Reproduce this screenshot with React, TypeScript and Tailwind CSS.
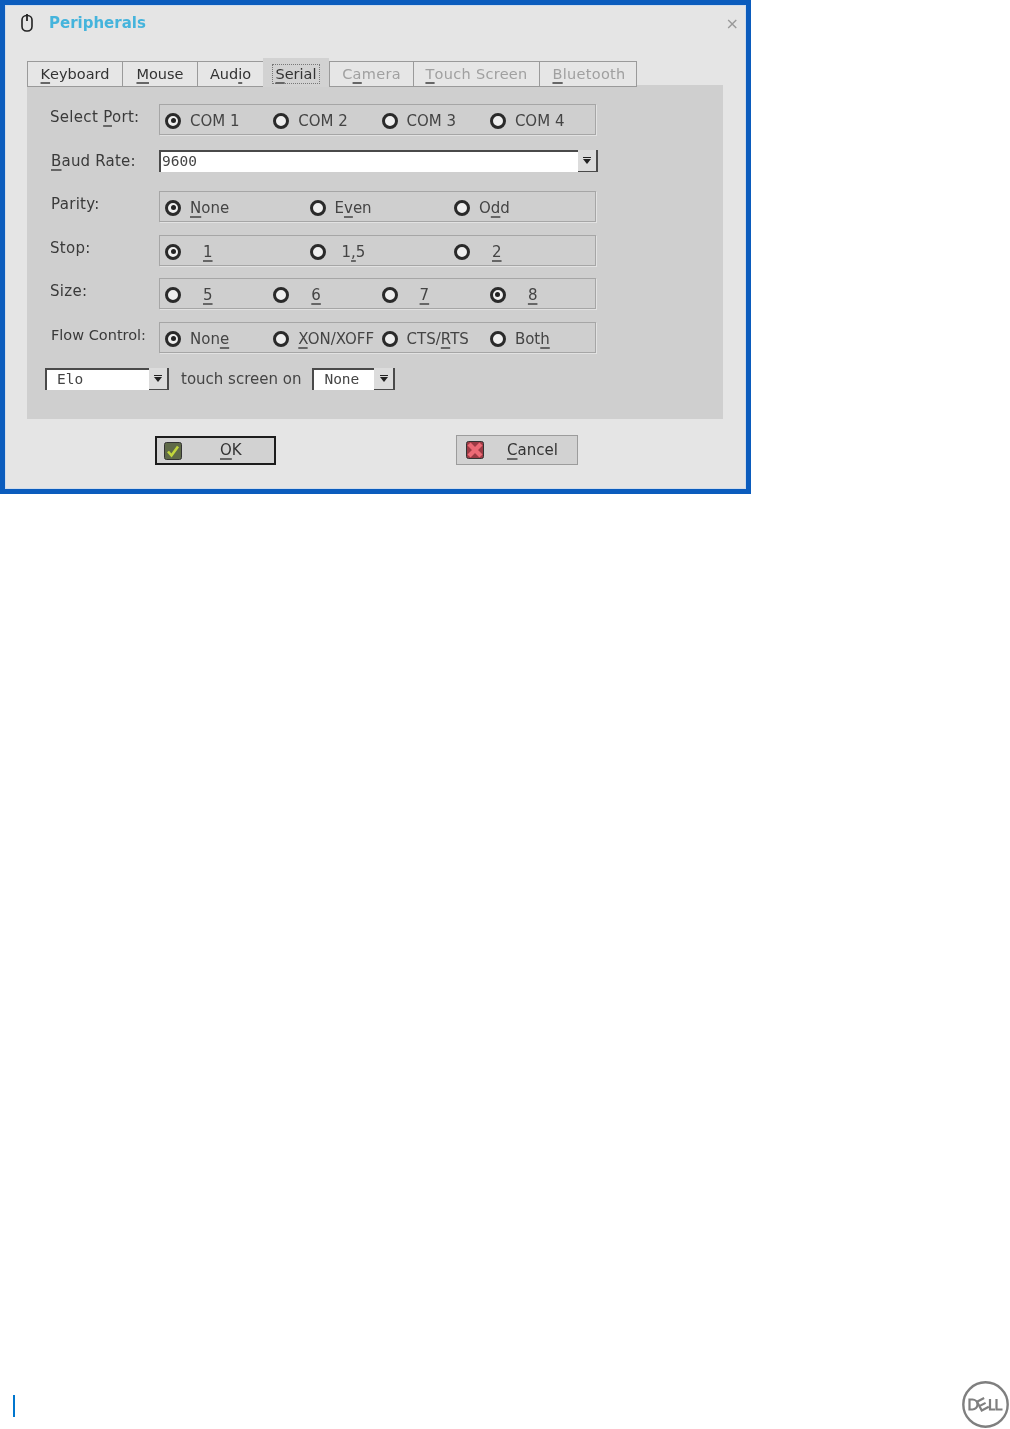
import type { ReactNode } from 'react'

function U({ children }: { children: string }) {
  return <span className="underline decoration-[#666] decoration-[1.5px] underline-offset-[3px]">{children}</span>
}

function Radio({ checked }: { checked?: boolean }) {
  return (
    <span className="flex h-[16px] w-[16px] shrink-0 items-center justify-center rounded-full border-[3px] border-[#2a2a2a] bg-[#efefef]">
      {checked && <span className="h-[5px] w-[5px] rounded-full bg-[#222]" />}
    </span>
  )
}

function Option({ checked, gap = 'ml-[9px]', children }: { checked?: boolean; gap?: string; children: ReactNode }) {
  return (
    <div className="flex items-center">
      <Radio checked={checked} />
      <span className={`mt-[1px] whitespace-nowrap text-[15px] leading-none text-[#444] ${gap}`}>{children}</span>
    </div>
  )
}

function Label({ children }: { children: ReactNode }) {
  return <div className="w-[132px] pl-[23px] text-[15px] leading-[20px] tracking-[0.3px] text-[#3a3a3a]">{children}</div>
}

function Row({ label, cols, className, children }: { label: ReactNode; cols: string; className: string; children: ReactNode }) {
  return (
    <div className={`flex items-center ${className}`}>
      <div className="-mt-[5px]">
        <Label>{label}</Label>
      </div>
      <div className={`grid h-[31px] w-[437px] items-center border border-[#a6a6a6] pl-[5px] pt-[2px] shadow-[1px_1px_0_#e2e2e2] ${cols}`}>{children}</div>
    </div>
  )
}

function Arrow({ w = 'w-[20px]' }: { w?: string }) {
  return (
    <span className={`flex h-full ${w} shrink-0 flex-col items-center justify-center gap-[1px] border-r-2 border-b-[1.5px] border-[#4a4a4a] bg-[#dcdcdc]`}>
      <span className="h-[1px] w-[8px] bg-[#222]" />
      <span className="h-0 w-0 border-x-[4px] border-t-[5px] border-x-transparent border-t-[#222]" />
    </span>
  )
}

function Combo({ value, boxW, arrowW }: { value: string; boxW: string; arrowW: string }) {
  return (
    <div className="flex h-[22px]">
      <div className={`flex ${boxW} items-center border-t-2 border-l-2 border-[#4a4a4a] bg-white pb-[2px] pl-[10px] font-['DejaVu_Sans_Mono',monospace] text-[14.5px] leading-none text-[#444]`}>
        {value}
      </div>
      <Arrow w={arrowW} />
    </div>
  )
}

function Tab({ w, dim, active, children }: { w: string; dim?: boolean; active?: boolean; children: ReactNode }) {
  if (active) {
    return (
      <div className={`relative z-10 flex h-[29px] ${w} items-center justify-center bg-[#d2d2d2]`}>
        <span className="mt-[2px] border border-dotted border-[#777] px-[2px] text-[14.5px] leading-[18px] text-[#333]">{children}</span>
      </div>
    )
  }
  return (
    <div className={`relative z-10 -mr-px flex h-[26px] ${w} items-center justify-center border border-[#9a9a9a] bg-[#e6e6e6] pt-[1px] text-[14.5px] ${dim ? 'tracking-[0.3px] text-[#a0a0a0]' : 'text-[#333]'}`}>
      {children}
    </div>
  )
}

function OkIcon() {
  return (
    <svg width="18" height="18" viewBox="0 0 18 18">
      <rect x="0.5" y="0.5" width="17" height="17" rx="2" fill="#5f6a48" stroke="#333" />
      <path d="M4 9.5l3.5 4L14 4.5" fill="none" stroke="#c2d63c" strokeWidth="2.6" />
    </svg>
  )
}

function CancelIcon() {
  return (
    <svg width="18" height="18" viewBox="0 0 18 18">
      <rect x="0.5" y="0.5" width="17" height="17" rx="2" fill="#9c3a44" stroke="#333" />
      <path d="M3 3l12 12M15 3L3 15" fill="none" stroke="#ec6a75" strokeWidth="4.4" />
    </svg>
  )
}

function DellLogo() {
  return (
    <svg width="47" height="47" viewBox="0 0 47 47" fill="none" stroke="#7f7f7f">
      <circle cx="23.5" cy="23.5" r="22.2" strokeWidth="2.4" />
      <path d="M7.5 18.5h3a5 5 0 0 1 0 10h-3z" strokeWidth="2.2" />
      <g transform="rotate(-28 20.5 23.5)">
        <path d="M25 18.5h-8v10h8M17 23.5h7" strokeWidth="2.2" />
      </g>
      <path d="M28 18v10.5h5M34.5 18v10.5h6" strokeWidth="2.2" />
    </svg>
  )
}

export default function App() {
  return (
    <div className="flex h-[1429px] w-[1010px] flex-col bg-white font-['DejaVu_Sans',sans-serif]">
      <div className="flex h-[494px] w-[751px] shrink-0 flex-col border-[5px] border-[#0b5cbd] bg-[#e5e5e5] shadow-[inset_0_0_0_1px_#cfdcec] blur-[0.4px]">
        <div className="flex h-[54px] shrink-0 items-start pl-[15px] pt-[8px]">
          <svg width="14" height="20" viewBox="0 0 14 20" fill="none" stroke="#222" strokeWidth="1.6">
            <rect x="2" y="2.5" width="10" height="15.5" rx="4.5" />
            <path d="M7 1v7" strokeWidth="1.8" />
          </svg>
          <span className="ml-[15px] text-[15px] font-bold leading-[20px] text-[#45b4dc]">Peripherals</span>
          <span className="ml-auto mr-[7px] mt-[1px] text-[16px] leading-[20px] text-[#999]">×</span>
        </div>
        <div className="ml-[22px] w-[696px]">
          <div className="-mb-[2px] flex h-[28px] items-end">
            <Tab w="w-[96px]"><U>K</U>eyboard</Tab>
            <Tab w="w-[76px]"><U>M</U>ouse</Tab>
            <Tab w="w-[67px]">Aud<U>i</U>o</Tab>
            <Tab w="w-[66px]" active><U>S</U>erial</Tab>
            <Tab w="w-[85px]" dim>C<U>a</U>mera</Tab>
            <Tab w="w-[127px]" dim><U>T</U>ouch Screen</Tab>
            <Tab w="w-[98px]" dim><span className="pl-[2px]"><U>B</U>luetooth</span></Tab>
          </div>
          <div className="flex h-[334px] flex-col bg-[#cfcfcf] pt-[19px]">
            <Row label={<>Select <U>P</U>ort:</>} cols="grid-cols-[repeat(4,108.3px)]" className="">
              <Option checked>COM 1</Option>
              <Option>COM 2</Option>
              <Option>COM 3</Option>
              <Option>COM 4</Option>
            </Row>
            <div className="mt-[15px] flex items-center">
              <Label><span className="ml-px tracking-[0.2px]"><U>B</U>aud Rate:</span></Label>
              <div className="flex h-[22px] w-[439px]">
                <div className="flex flex-1 items-center border-t-2 border-l-2 border-[#4a4a4a] bg-white pb-[2px] pl-[1px] font-['DejaVu_Sans_Mono',monospace] text-[14.5px] leading-none text-[#444]">9600</div>
                <Arrow />
              </div>
            </div>
            <Row label={<span className="ml-px">Parity:</span>} cols="grid-cols-[repeat(3,144.5px)]" className="mt-[19px]">
              <Option checked><U>N</U>one</Option>
              <Option>E<U>v</U>en</Option>
              <Option>O<U>d</U>d</Option>
            </Row>
            <Row label="Stop:" cols="grid-cols-[repeat(3,144.5px)]" className="mt-[13px]">
              <Option checked gap="ml-[22px]"><U>1</U></Option>
              <Option gap="ml-[16px]">1<U>,</U>5</Option>
              <Option gap="ml-[22px]"><U>2</U></Option>
            </Row>
            <Row label="Size:" cols="grid-cols-[repeat(4,108.3px)]" className="mt-[12px]">
              <Option gap="ml-[22px]"><U>5</U></Option>
              <Option gap="ml-[22px]"><U>6</U></Option>
              <Option gap="ml-[22px]"><U>7</U></Option>
              <Option checked gap="ml-[22px]"><U>8</U></Option>
            </Row>
            <Row label={<span className="ml-px text-[14.5px] tracking-normal">Flow Control:</span>} cols="grid-cols-[repeat(4,108.3px)]" className="mt-[13px]">
              <Option checked>Non<U>e</U></Option>
              <Option><U>X</U>ON/XOFF</Option>
              <Option>CTS/<U>R</U>TS</Option>
              <Option>Bot<U>h</U></Option>
            </Row>
            <div className="mt-[15px] flex items-center pl-[18px]">
              <Combo value="Elo" boxW="w-[104px]" arrowW="w-[20px]" />
              <span className="ml-[12px] mr-[11px] text-[15px] leading-none text-[#444]">touch screen on</span>
              <Combo value="None" boxW="w-[62px]" arrowW="w-[21px]" />
            </div>
          </div>
        </div>
        <div className="mt-[17px] flex items-start pl-[150px]">
          <div className="flex h-[29px] w-[121px] items-center border-2 border-[#1c1c1c] bg-[#d2d2d2] pl-[7px]">
            <OkIcon />
            <span className="ml-[38px] text-[15px] leading-none text-[#333]"><U>O</U>K</span>
          </div>
          <div className="ml-[180px] -mt-[1px] flex h-[30px] w-[122px] items-center border border-[#9c9c9c] bg-[#d2d2d2] pl-[9px]">
            <CancelIcon />
            <span className="ml-[23px] text-[15px] leading-none text-[#333]"><U>C</U>ancel</span>
          </div>
        </div>
      </div>
      <div className="mt-auto mb-[1px] flex h-[47px] items-center justify-between pl-[13px] pr-[1px]">
        <div className="mt-[2px] h-[22px] w-[2px] bg-[#0076ce]" />
        <DellLogo />
      </div>
    </div>
  )
}
